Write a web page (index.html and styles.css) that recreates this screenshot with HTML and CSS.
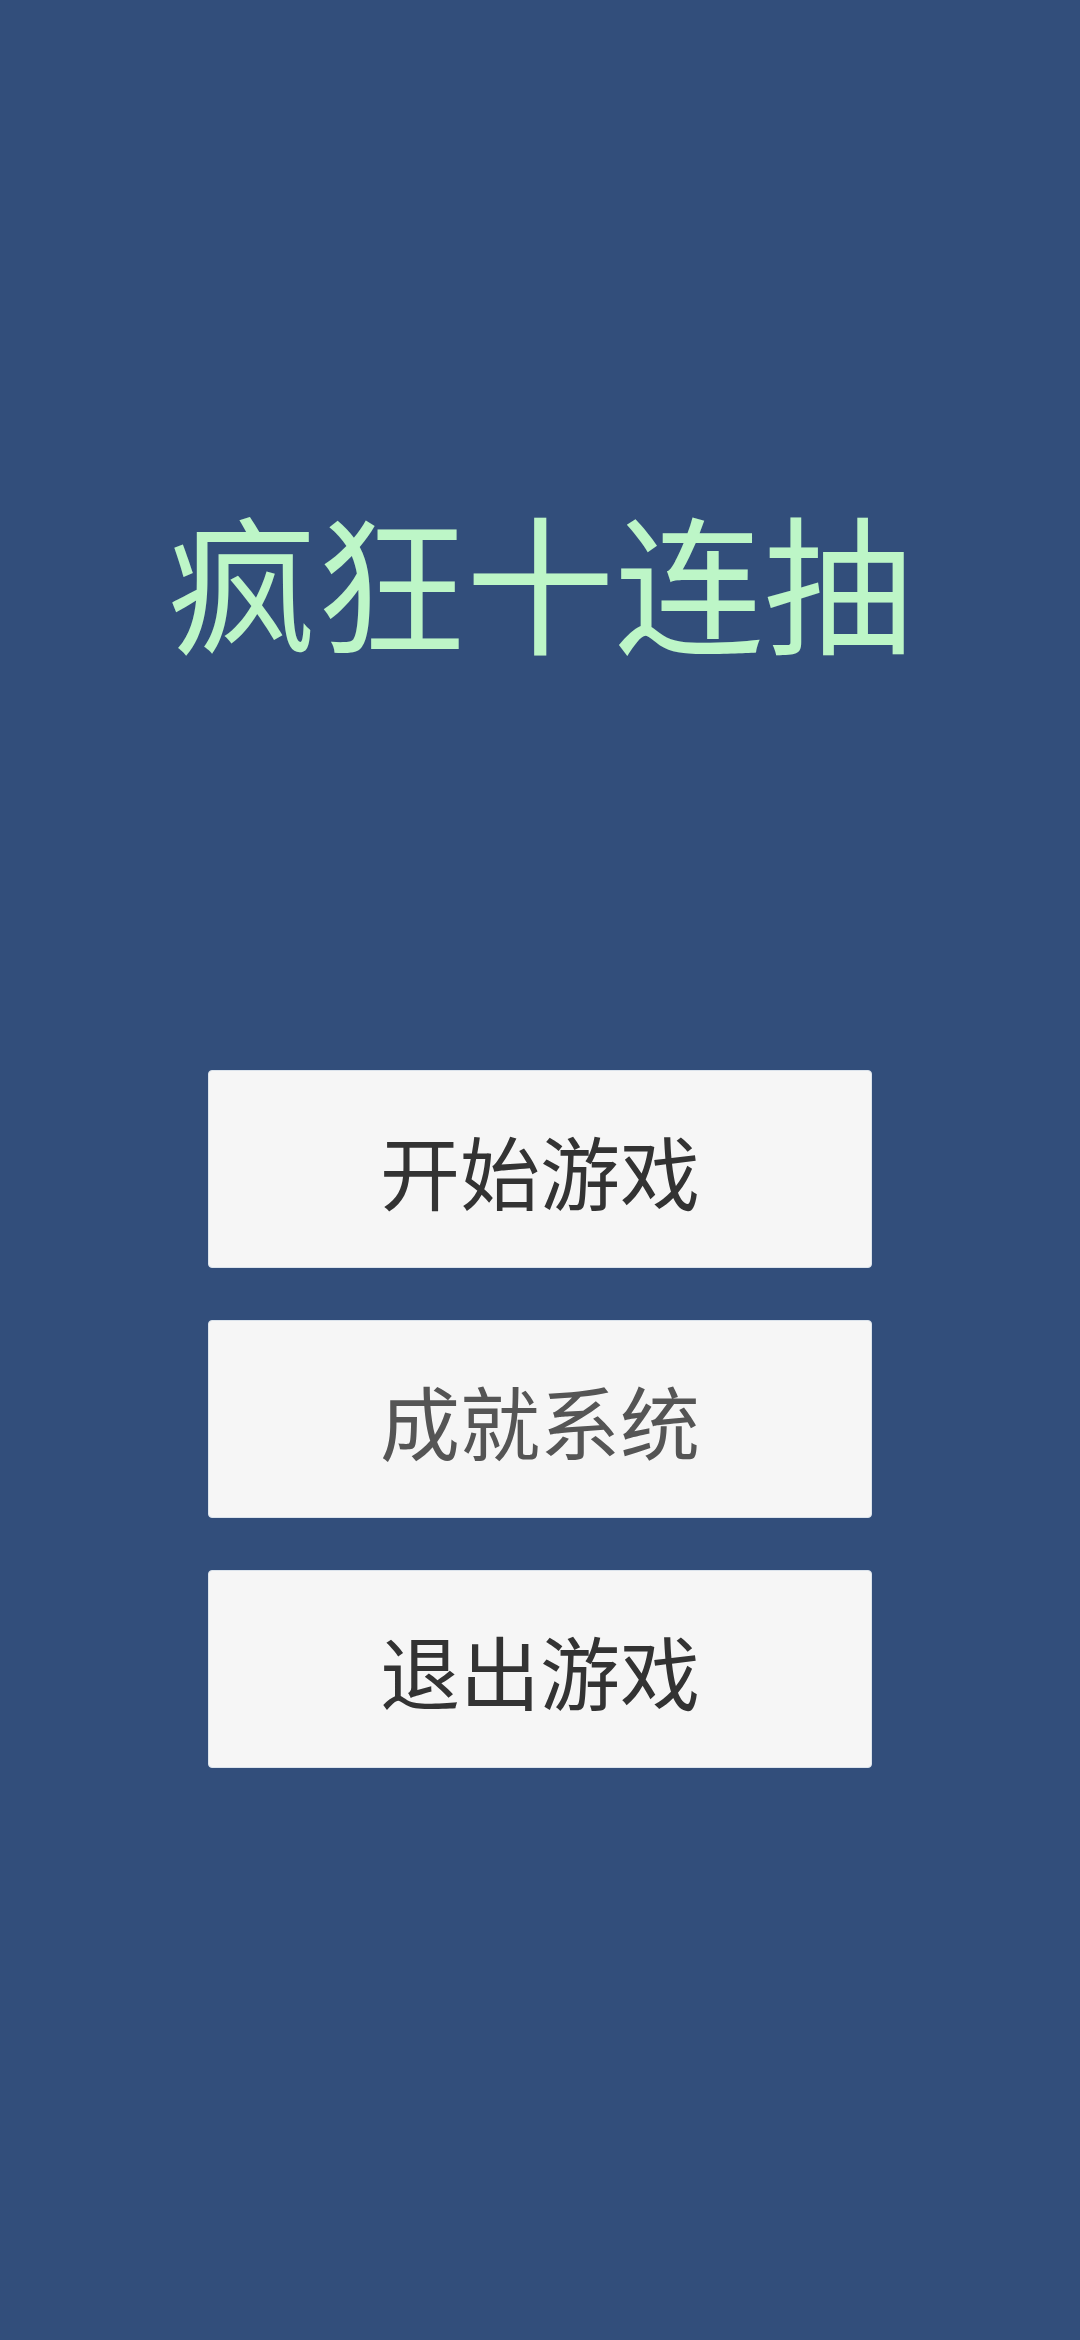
FILE: index.html
```html
<!DOCTYPE html>
<html>
<head>
    <title>疯狂十连抽</title>
    <link rel="stylesheet" href="styles.css">
</head>
<body>
    <div class="screen">
        <h1 class="title">疯狂十连抽</h1>
        <div class="menu">
            <button class="btn-menu">开始游戏</button>
            <button class="btn-menu btn-dim">成就系统</button>
            <button class="btn-menu">退出游戏</button>
        </div>
    </div>
</body>
</html>
```

FILE: styles.css
```css
html,
body {
    margin: 0;
    padding: 0;
    background-color: #324e7b;
}

body {
    font-family: "Noto Sans CJK SC", "Noto Sans", sans-serif;
}

.screen {
    display: flex;
    flex-direction: column;
    align-items: center;
    min-height: 2340px;
}

.title {
    margin: 503px 0 0;
    font-size: 149px;
    font-weight: normal;
    line-height: 150px;
    color: #bdf6c7;
    text-align: center;
}

.menu {
    display: flex;
    flex-direction: column;
    gap: 52px;
    margin-top: 417px;
}

.btn-menu {
    width: 664px;
    height: 198px;
    padding: 0;
    border: 1px solid #dbe3ec;
    border-radius: 4px;
    background-color: #f6f6f6;
    color: #333;
    font-family: inherit;
    font-size: 80px;
    line-height: 1;
    cursor: pointer;
}

.btn-dim {
    color: #555;
}
```
